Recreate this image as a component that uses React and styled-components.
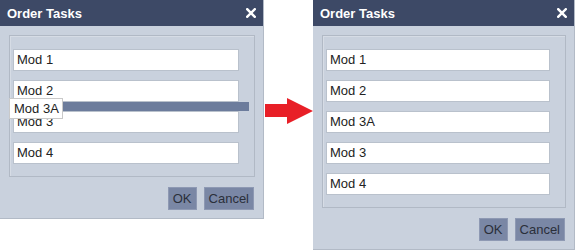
import React from 'react';
import styled, { createGlobalStyle } from 'styled-components';

const GlobalStyle = createGlobalStyle`
  html, body {
    margin: 0;
    padding: 0;
    background: #ffffff;
  }
  body {
    font-family: "Liberation Sans", Arial, sans-serif;
  }
`;

const beforeItems = ['Mod 1', 'Mod 2', 'Mod 3', 'Mod 4'];
const afterItems = ['Mod 1', 'Mod 2', 'Mod 3A', 'Mod 3', 'Mod 4'];

const CloseIcon = () => (
  <svg width="10" height="10" viewBox="0 0 10 10">
    <path d="M1.2 1.2 L8.8 8.8 M8.8 1.2 L1.2 8.8" stroke="#ffffff" strokeWidth="2.4" strokeLinecap="square" />
  </svg>
);

const Dialog = ({ width, items, dragging }) => (
  <DialogBox width={width}>
    <Header>
      <Title>Order Tasks</Title>
      <CloseButton>
        <CloseIcon />
      </CloseButton>
    </Header>
    <Body>
      <Panel>
        <TaskList>
          {items.map((item) => (
            <TaskInput key={item}>{item}</TaskInput>
          ))}
          {dragging ? (
            <>
              <DropLine />
              <DragGhost>Mod 3A</DragGhost>
            </>
          ) : null}
        </TaskList>
      </Panel>
      <Footer>
        <Button>OK</Button>
        <Button>Cancel</Button>
      </Footer>
    </Body>
  </DialogBox>
);

const App = () => (
  <>
    <GlobalStyle />
    <Page>
      <Dialog width={263} items={beforeItems} dragging />
      <ArrowSlot>
        <svg width="48" height="26" viewBox="0 0 48 26">
          <polygon points="0,6 22,6 22,0 48,13 22,26 22,19 0,19" fill="#e81f27" />
        </svg>
      </ArrowSlot>
      <Dialog width={261} items={afterItems} />
    </Page>
  </>
);

const Page = styled.div`
  display: flex;
  flex-direction: row;
  align-items: flex-start;
  width: 576px;
  height: 252px;
  overflow: hidden;
`;

const ArrowSlot = styled.div`
  width: 49px;
  flex-shrink: 0;
  display: flex;
  justify-content: flex-end;
  margin-top: 98px;
`;

const DialogBox = styled.div`
  width: ${(props) => props.width}px;
  flex-shrink: 0;
  background: #c9d1dd;
  border-right: 1px solid #b2bac6;
  border-bottom: 1px solid #b2bac6;
  display: flex;
  flex-direction: column;
`;

const Header = styled.div`
  height: 26px;
  background: #3d4966;
  display: flex;
  flex-direction: row;
  align-items: center;
  justify-content: space-between;
  padding: 0 7px 0 7px;
`;

const Title = styled.div`
  color: #ffffff;
  font-size: 13px;
  font-weight: 700;
`;

const CloseButton = styled.div`
  display: flex;
  align-items: center;
  margin-top: -1px;
`;

const Body = styled.div`
  padding: 9px 8px 8px 9px;
  display: flex;
  flex-direction: column;
`;

const Panel = styled.div`
  border: 1px solid #b1b9c5;
  box-shadow: inset 1px 1px 0 #d6dce5;
  padding: 13px 15px 12px 3px;
`;

const TaskList = styled.div`
  position: relative;
  display: flex;
  flex-direction: column;
  gap: 9px;
`;

const TaskInput = styled.div`
  height: 20px;
  background: #ffffff;
  border: 1px solid #b9c1cc;
  padding-left: 3px;
  font-size: 13px;
  line-height: 20px;
  color: #222222;
`;

const DropLine = styled.div`
  position: absolute;
  left: 1px;
  right: -10px;
  top: 53px;
  height: 9px;
  background: #6c7c9c;
`;

const DragGhost = styled.div`
  position: absolute;
  left: -4px;
  top: 49px;
  height: 19px;
  padding: 0 3px 0 4px;
  background: #ffffff;
  border: 1px solid #c9c9c9;
  font-size: 13px;
  line-height: 19px;
  color: #222222;
`;

const Footer = styled.div`
  display: flex;
  flex-direction: row;
  justify-content: flex-end;
  gap: 7px;
  margin-top: 10px;
  padding-right: 1px;
`;

const Button = styled.div`
  height: 21px;
  padding: 0 4px;
  background: #7a87a5;
  border: 1px solid #8e99b3;
  color: #2a2f3a;
  font-size: 13px;
  line-height: 21px;
`;

export default App;
